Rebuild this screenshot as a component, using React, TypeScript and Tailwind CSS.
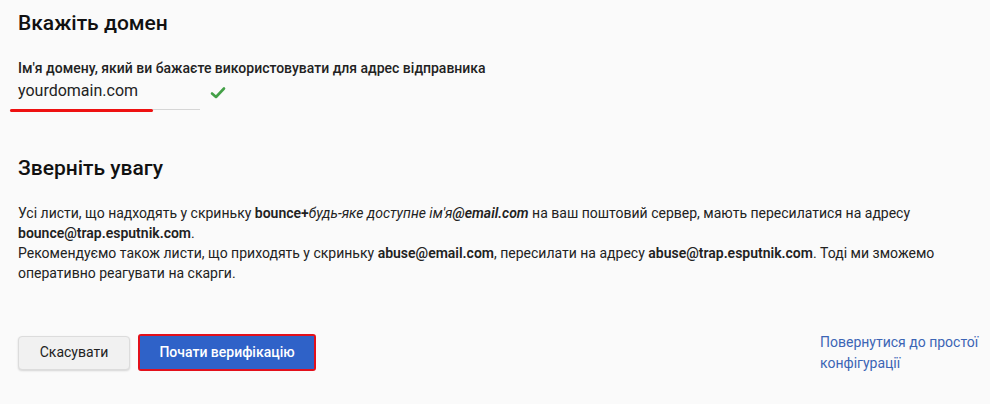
import React from "react";

export default function App() {
  return (
    <div
      className="w-[990px] h-[404px] bg-[#fafafa] text-[#222] overflow-hidden relative"
      style={{ fontFamily: "Roboto, 'Noto Sans', sans-serif" }}
    >
      <div className="pl-[18px] pr-[10px] pt-[10px]">
        <h1 className="text-[21px] leading-[26px] font-medium text-[#111]">Вкажіть домен</h1>
        <div className="mt-[23px] text-[14px] leading-[18px] font-medium text-[#222]">
          Ім'я домену, який ви бажаєте використовувати для адрес відправника
        </div>
        <div className="flex items-center mt-[2px]">
          <div className="relative -ml-[8px] w-[190px] border-b border-[#d6d6d6] pl-[8px] pb-[6px]">
            <span className="text-[16px] leading-[20px] text-[#222]">yourdomain.com</span>
            <div className="absolute left-0 -bottom-[3px] w-[143px] h-[3px] rounded-full bg-[#ee1111]" />
          </div>
          <svg className="ml-[10px] -mt-[4px]" width="16" height="14" viewBox="0 0 16 14">
            <path d="M2 7.5 L6 11 L14 2.5" fill="none" stroke="#43a047" strokeWidth="2.6" strokeLinecap="round" strokeLinejoin="round" />
          </svg>
        </div>

        <h2 className="mt-[45px] text-[21px] leading-[26px] font-medium text-[#111]">Зверніть увагу</h2>
        <div className="mt-[22px] text-[14px] leading-[20px] text-[#222]">
          <div>
            Усі листи, що надходять у скриньку <b className="font-semibold">bounce+</b>
            <i>будь-яке доступне ім'я</i>
            <b className="font-semibold italic">@email.com</b> на ваш поштовий сервер, мають пересилатися на адресу
          </div>
          <div>
            <b className="font-semibold">bounce@trap.esputnik.com</b>.
          </div>
          <div>
            Рекомендуємо також листи, що приходять у скриньку <b className="font-semibold">abuse@email.com</b>, пересилати на адресу{" "}
            <b className="font-semibold">abuse@trap.esputnik.com</b>. Тоді ми зможемо
          </div>
          <div>оперативно реагувати на скарги.</div>
        </div>

        <div className="mt-[50px] flex items-start justify-between">
          <div className="flex items-center gap-[8px] pt-[1px]">
            <button className="w-[112px] h-[34px] rounded-[4px] bg-[#f1f1f1] border border-[#dcdcdc] shadow-[0_1px_2px_rgba(0,0,0,0.15)] text-[14px] text-[#222]">
              Скасувати
            </button>
            <div className="border-2 border-[#e3101b] rounded-[3px] p-0">
              <button className="w-[174px] h-[33px] bg-[#2f62c8] text-white text-[14px] font-medium">
                Почати верифікацію
              </button>
            </div>
          </div>
          <a className="text-[14px] leading-[21px] text-[#3c65b5] w-[160px] -mt-[1px]">
            Повернутися до простої конфігурації
          </a>
        </div>
      </div>
    </div>
  );
}
